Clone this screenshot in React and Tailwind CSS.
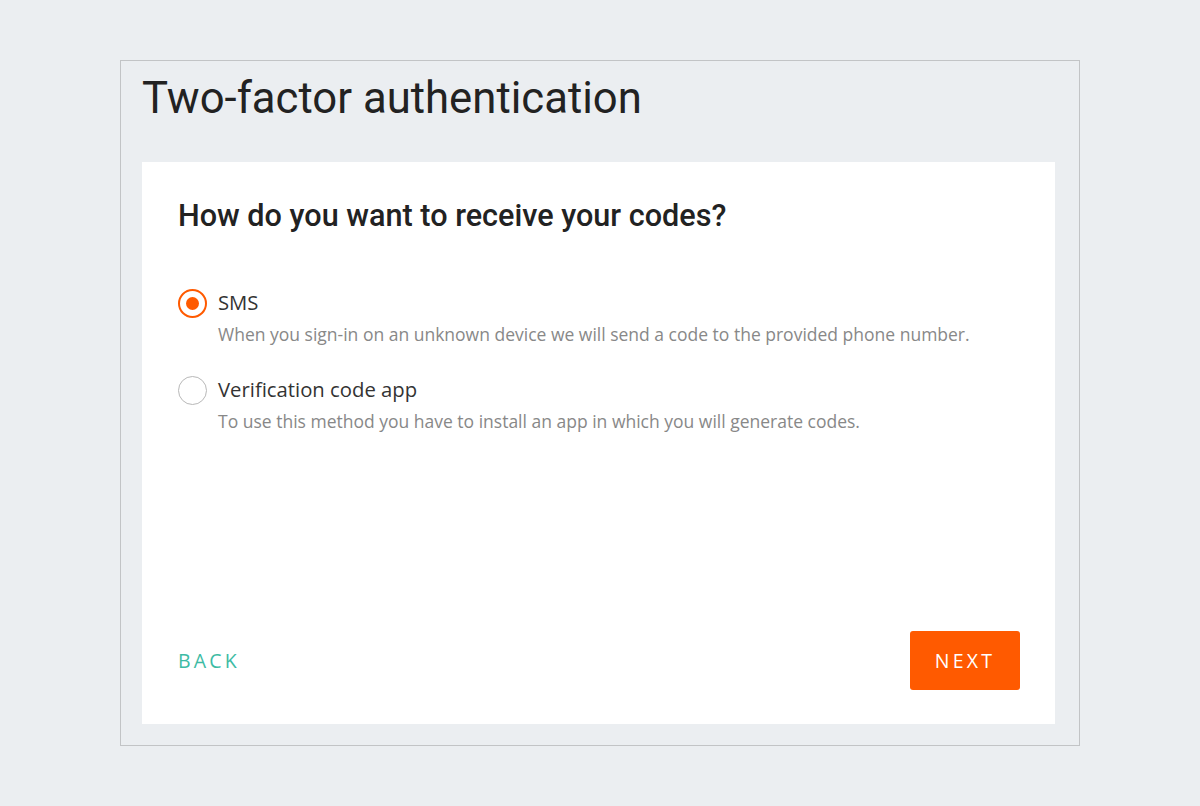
import React, { useState } from "react";

const options = [
  {
    id: "sms",
    label: "SMS",
    desc: "When you sign-in on an unknown device we will send a code to the provided phone number.",
  },
  {
    id: "app",
    label: "Verification code app",
    desc: "To use this method you have to install an app in which you will generate codes.",
  },
];

export default function App() {
  const [value, setValue] = useState("sms");
  return (
    <div className="min-h-[806px] w-full bg-[#ebeef1] pt-[60px]">
      <div className="mx-auto w-[960px] h-[686px] border border-[#c2c4c6] bg-[#ebeef1] flex flex-col">
        <h1 className="px-[21px] pt-[11px] h-[101px] text-[43.7px] leading-[52px] text-[#222] font-['Roboto',sans-serif] font-normal">
          Two-factor authentication
        </h1>
        <div className="ml-[21px] w-[913px] h-[562px] bg-white flex flex-col pl-[36px] pr-[35px] pt-[36px] pb-[34px]">
          <h2 className="text-[30.6px] leading-[36px] font-medium text-[#222] font-['Roboto',sans-serif]">
            How do you want to receive your codes?
          </h2>
          <div className="mt-[55px] flex flex-col gap-[30px] font-['Open_Sans',sans-serif]">
            {options.map((o) => {
              const sel = value === o.id;
              return (
                <label
                  key={o.id}
                  className="grid grid-cols-[29px_1fr] gap-x-[11px] cursor-pointer"
                  onClick={() => setValue(o.id)}
                >
                  <span className="flex items-center">
                    <span
                      className={
                        sel
                          ? "w-[29px] h-[29px] rounded-full border-[2px] border-[#ff5a00] flex items-center justify-center"
                          : "w-[29px] h-[29px] rounded-full border border-[#b8b8b8] flex items-center justify-center"
                      }
                    >
                      {sel && <span className="w-[13px] h-[13px] rounded-full bg-[#ff5a00]" />}
                    </span>
                  </span>
                  <span className="text-[20.3px] leading-[26px] text-[#333]">{o.label}</span>
                  <span className="col-start-2 mt-[4px] text-[17.5px] leading-[24px] text-[#888]">{o.desc}</span>
                </label>
              );
            })}
          </div>
          <div className="mt-auto flex items-center justify-between">
            <button className="text-[19.5px] tracking-[3.2px] text-[#3dbba4] font-['Open_Sans',sans-serif] px-0">
              BACK
            </button>
            <button className="w-[110px] h-[59px] rounded-[3px] bg-[#ff5a00] text-white text-[19.5px] tracking-[3.2px] font-['Open_Sans',sans-serif]">
              NEXT
            </button>
          </div>
        </div>
      </div>
    </div>
  );
}
